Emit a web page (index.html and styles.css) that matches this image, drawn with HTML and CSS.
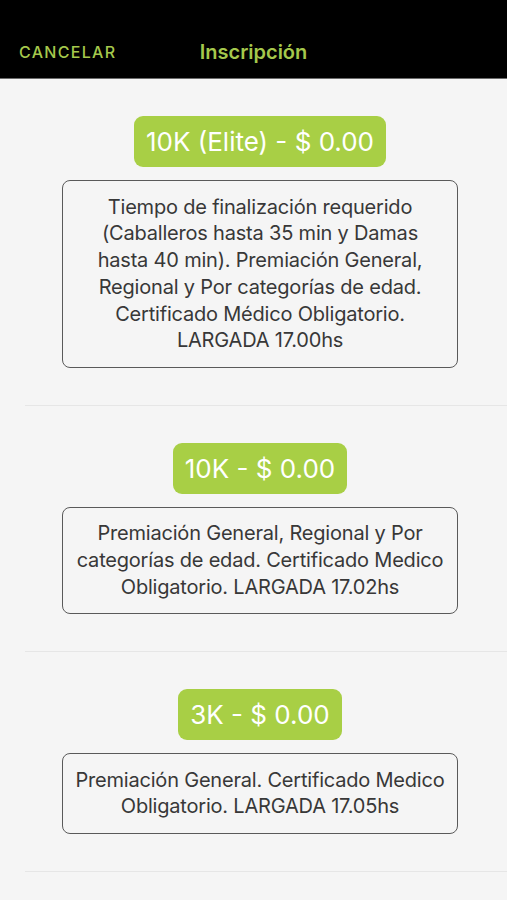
FILE: index.html
```html
<!DOCTYPE html>
<html lang="es">
<head>
<meta charset="utf-8">
<link rel="stylesheet" href="styles.css">
</head>
<body>
<header class="topbar">
  <span class="cancel">CANCELAR</span>
  <span class="title">Inscripción</span>
</header>
<main class="list">
  <section class="race">
    <div class="badge">10K (Elite) - $ 0.00</div>
    <div class="desc">Tiempo de finalización requerido (Caballeros hasta 35 min y Damas hasta 40 min). Premiación General, Regional y Por categorías de edad. Certificado Médico Obligatorio. LARGADA 17.00hs</div>
  </section>
  <div class="sep"></div>
  <section class="race">
    <div class="badge">10K - $ 0.00</div>
    <div class="desc">Premiación General, Regional y Por categorías de edad. Certificado Medico Obligatorio. LARGADA 17.02hs</div>
  </section>
  <div class="sep"></div>
  <section class="race">
    <div class="badge">3K - $ 0.00</div>
    <div class="desc">Premiación General. Certificado Medico Obligatorio. LARGADA 17.05hs</div>
  </section>
  <div class="sep"></div>
</main>
</body>
</html>
```
FILE: styles.css
```css
* { box-sizing: border-box; }
html, body {
  margin: 0;
  padding: 0;
  background: #f5f5f5;
  font-family: "Inter", "Liberation Sans", sans-serif;
}
.topbar {
  position: relative;
  height: 79px;
  background: #000;
  border-bottom: 1px solid #6b6b6b;
  display: flex;
  align-items: flex-end;
  padding: 0 0 17px 19px;
}
.cancel {
  color: #a5c84c;
  font-size: 16px;
  letter-spacing: 1.3px;
  font-weight: 500;
  line-height: 18px;
}
.title {
  position: absolute;
  left: 0;
  right: 0;
  bottom: 14px;
  text-align: center;
  color: #a5c84c;
  font-size: 20px;
  font-weight: 600;
  line-height: 24px;
  pointer-events: none;
}
.list {
  display: flex;
  flex-direction: column;
}
.race {
  display: flex;
  flex-direction: column;
  align-items: center;
  padding: 37px 0 37px 13px;
}
.sep {
  height: 1px;
  margin-left: 25px;
  background: #e6e6e6;
}
.badge {
  background: #a8cf45;
  color: #fff;
  font-size: 26px;
  line-height: 51px;
  height: 51px;
  padding: 0 12px;
  border-radius: 9px;
}
.desc {
  margin-top: 13px;
  width: 396px;
  border: 1.5px solid #5a5a5a;
  border-radius: 8px;
  padding: 12.5px 12px;
  text-align: center;
  color: #383838;
  font-size: 20px;
  line-height: 26.8px;
  letter-spacing: -0.2px;
}
```
